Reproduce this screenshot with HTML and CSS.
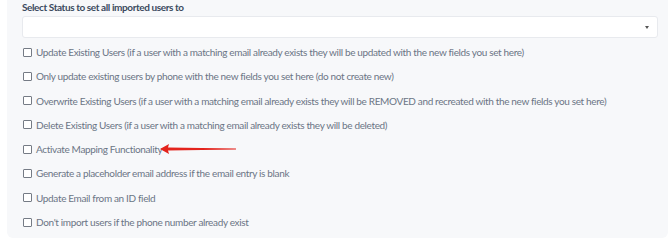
FILE: index.html
```html
<!DOCTYPE html>
<html>
<head>
<meta charset="utf-8">
<link rel="stylesheet" href="styles.css">
</head>
<body>
<div class="panel">
  <div class="label">Select Status to set all imported users to</div>
  <div class="select"><span class="caret"></span></div>
  <ul class="options">
    <li><span class="box"></span>Update Existing Users (if a user with a matching email already exists they will be updated with the new fields you set here)</li>
    <li><span class="box"></span>Only update existing users by phone with the new fields you set here (do not create new)</li>
    <li><span class="box"></span>Overwrite Existing Users (if a user with a matching email already exists they will be REMOVED and recreated with the new fields you set here)</li>
    <li><span class="box"></span>Delete Existing Users (if a user with a matching email already exists they will be deleted)</li>
    <li class="marked"><span class="box"></span>Activate Mapping Functionality
      <svg class="arrow" width="80" height="14" viewBox="0 0 80 14"><path d="M0 7 L9 2 L8 5.6 L76 6.6 L76 7.4 L8 8.4 L9 12 Z" fill="#e3231c"/></svg>
    </li>
    <li><span class="box"></span>Generate a placeholder email address if the email entry is blank</li>
    <li><span class="box"></span>Update Email from an ID field</li>
    <li><span class="box"></span>Don't import users if the phone number already exist</li>
  </ul>
</div>
</body>
</html>
```
FILE: styles.css
```css
html, body { margin: 0; padding: 0; background: #ffffff; }
body { width: 670px; height: 243px; overflow: hidden; font-family: "Lato", "Noto Sans", sans-serif; }
.panel {
  margin-left: 7px;
  width: 661px;
  height: 238px;
  box-sizing: border-box;
  background: #f7f8fa;
  border-radius: 0 0 6px 6px;
  padding: 0 10px 0 15px;
}
.label {
  font-size: 10px;
  font-weight: 700;
  letter-spacing: -0.4px;
  color: #3b4a5e;
  line-height: 14px;
}
.select {
  margin-top: 2px;
  height: 20px;
  background: #ffffff;
  border: 1px solid #e8eaee;
  border-radius: 3px;
  position: relative;
}
.caret {
  position: absolute;
  right: 8px;
  top: 9px;
  width: 0; height: 0;
  border-left: 2.5px solid transparent;
  border-right: 2.5px solid transparent;
  border-top: 3px solid #555;
}
.options { list-style: none; margin: 7px 0 0; padding: 0 0 0 1px; display: flex; flex-direction: column; gap: 10.3px; }
.options li {
  display: flex; align-items: center;
  font-size: 10px; line-height: 14px; color: #6b7585;
  letter-spacing: -0.35px;
  position: relative;
}
.box {
  width: 7px; height: 7px;
  border: 1px solid #757b85;
  border-radius: 1px;
  background: #fff;
  margin-right: 4px;
  flex: none;
}
.arrow { position: absolute; left: 137px; top: 0; }
```
